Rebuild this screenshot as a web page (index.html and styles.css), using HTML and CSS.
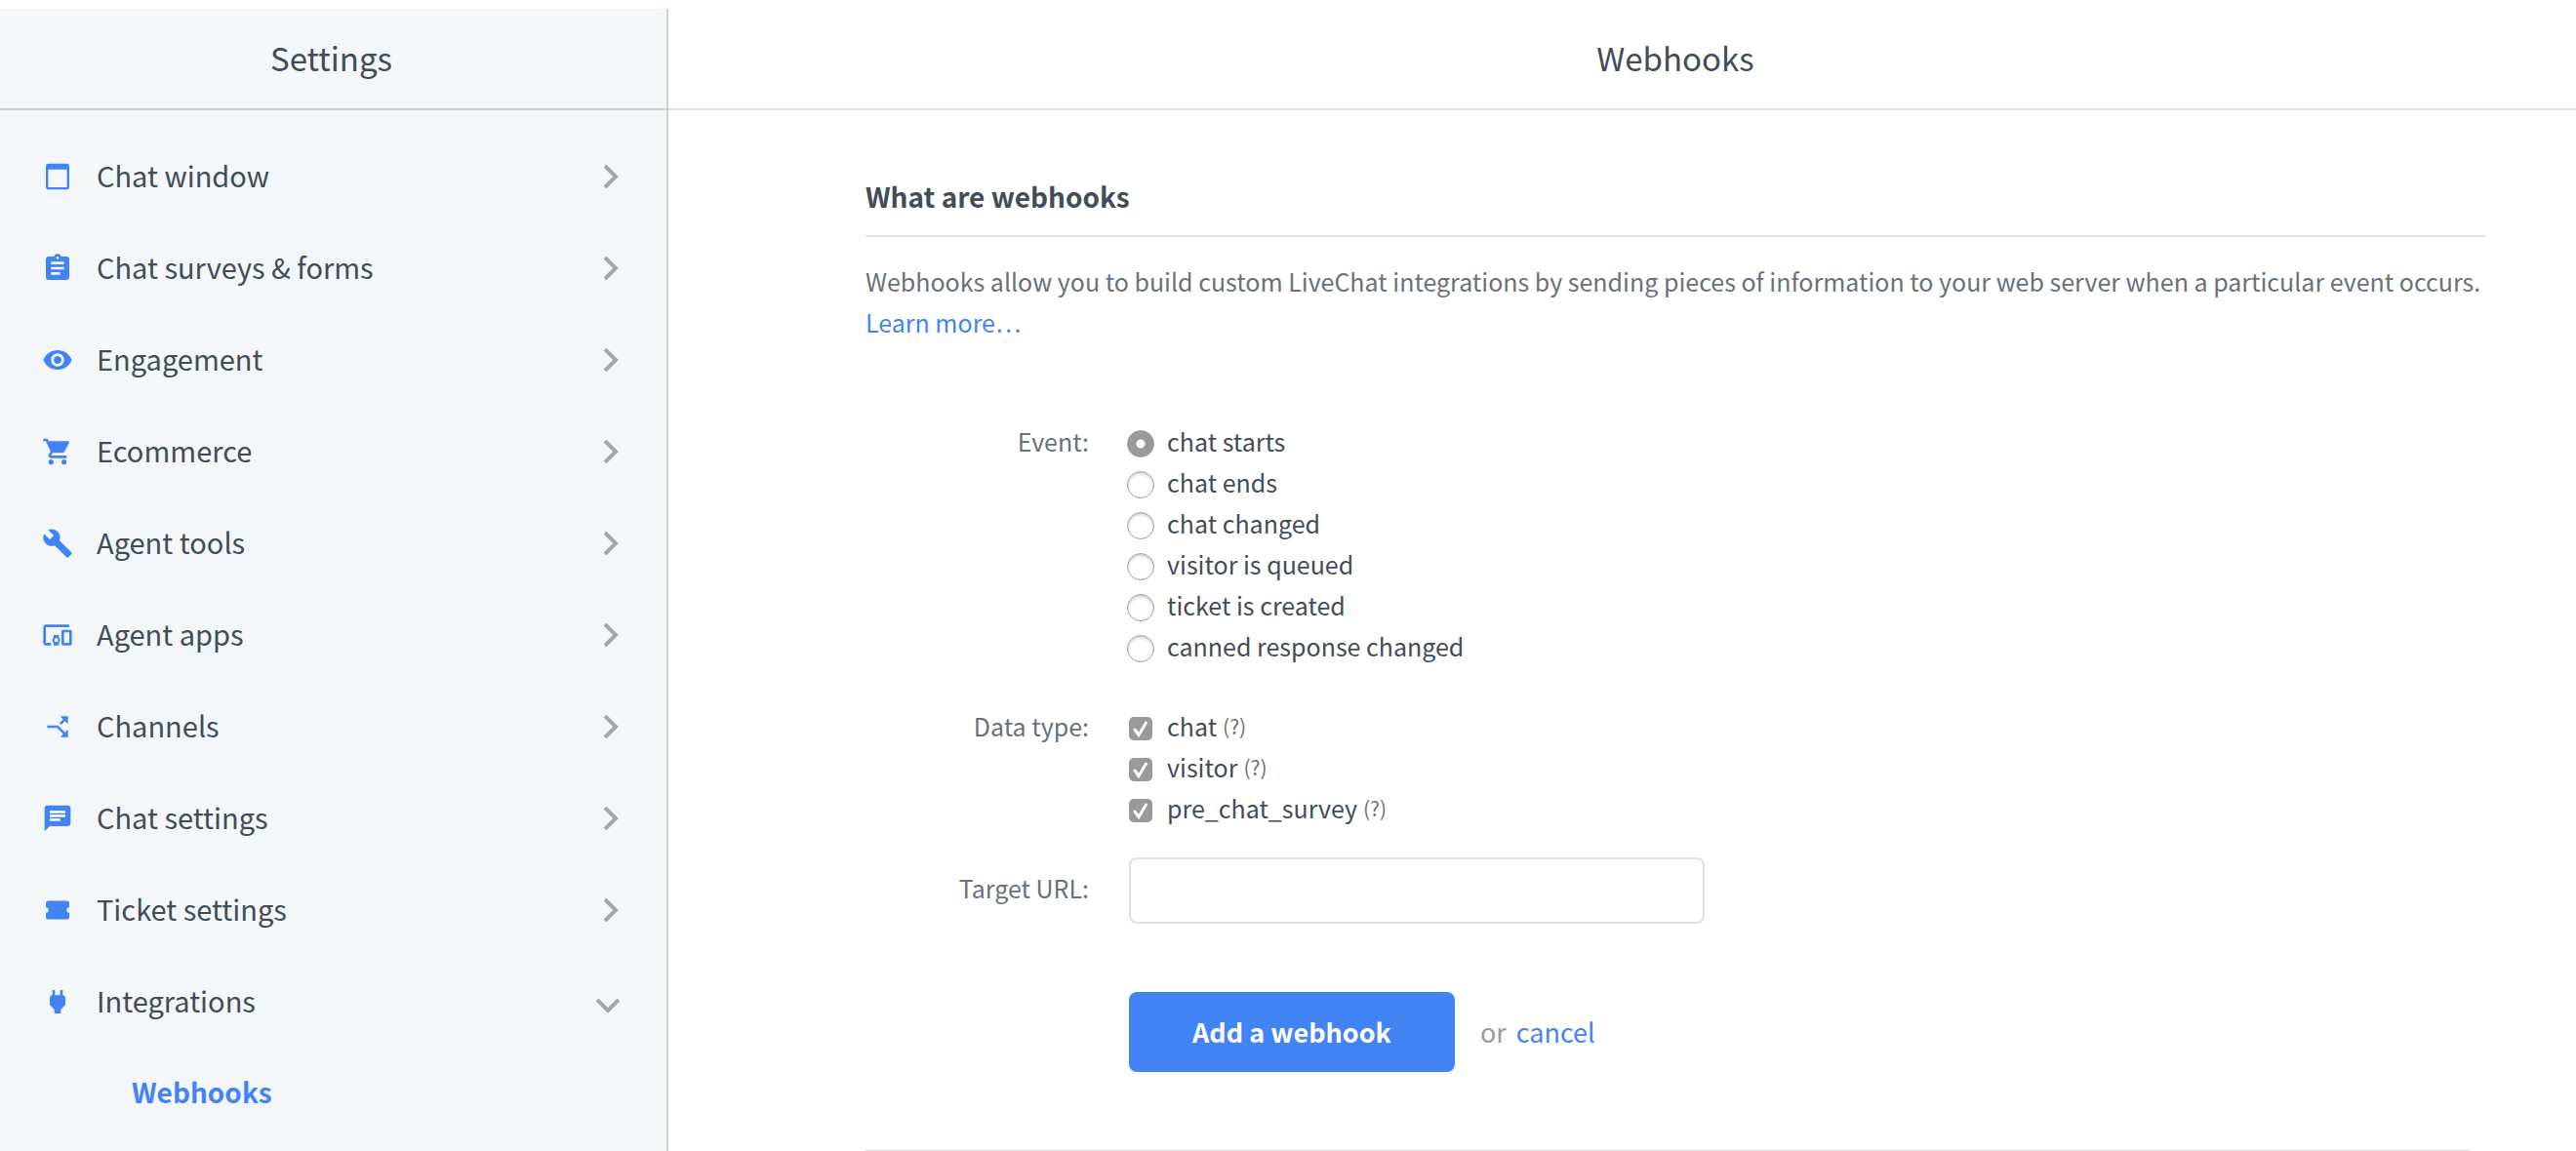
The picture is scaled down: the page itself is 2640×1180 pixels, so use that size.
FILE: index.html
```html
<!DOCTYPE html>
<html lang="en">
<head>
<meta charset="utf-8">
<title>Webhooks</title>
<link rel="stylesheet" href="styles.css">
</head>
<body>
<div class="app">
  <aside class="sidebar">
    <header class="bar bar-side"><h1 class="bar-title">Settings</h1></header>
    <nav>
      <ul class="menu">
        <li><a class="item" href="#"><svg class="icon" viewBox="0 0 24 24"><path d="M19 2H5c-1.100 0-2 .9-2 2v16c0 1.100.9 2 2 2h14c1.100 0 2-.9 2-2V4c0-1.100-.9-2-2-2zm.2 18.200H4.800V6.600h14.400z"/></svg><span class="name">Chat window</span><svg class="chevron" viewBox="0 0 24 24"><path d="M9 1l11 11L9 23"/></svg></a></li>
        <li><a class="item" href="#"><svg class="icon" viewBox="0 0 24 24"><path d="M19 3h-4.180C14.400 1.840 13.300 1 12 1c-1.300 0-2.400.84-2.820 2H5c-1.100 0-2 .9-2 2v14c0 1.100.9 2 2 2h14c1.100 0 2-.9 2-2V5c0-1.100-.9-2-2-2zm-7 0c.55 0 1 .45 1 1s-.45 1-1 1-1-.45-1-1 .45-1 1-1zm2 14H7v-2h7v2zm3-4H7v-2h10v2zm0-4H7V7h10v2z"/></svg><span class="name">Chat surveys &amp; forms</span><svg class="chevron" viewBox="0 0 24 24"><path d="M9 1l11 11L9 23"/></svg></a></li>
        <li><a class="item" href="#"><svg class="icon" viewBox="0 0 24 24"><path d="M12 4.500C7 4.500 2.730 7.610 1 12c1.730 4.390 6 7.500 11 7.500s9.270-3.110 11-7.500c-1.730-4.390-6-7.500-11-7.500zM12 17c-2.760 0-5-2.240-5-5s2.240-5 5-5 5 2.240 5 5-2.240 5-5 5zm0-8c-1.660 0-3 1.340-3 3s1.340 3 3 3 3-1.340 3-3-1.340-3-3-3z"/></svg><span class="name">Engagement</span><svg class="chevron" viewBox="0 0 24 24"><path d="M9 1l11 11L9 23"/></svg></a></li>
        <li><a class="item" href="#"><svg class="icon" viewBox="0 0 24 24"><path d="M7 18c-1.100 0-1.990.9-1.990 2S5.900 22 7 22s2-.9 2-2-.9-2-2-2zM1 2v2h2l3.600 7.590-1.350 2.450c-.16.28-.25.61-.25.96 0 1.100.9 2 2 2h12v-2H7.420c-.14 0-.25-.11-.25-.25l.03-.12.9-1.630h7.450c.75 0 1.410-.41 1.750-1.030l3.580-6.490c.08-.14.12-.31.12-.48 0-.55-.45-1-1-1H5.210l-.94-2H1zm16 16c-1.100 0-1.990.9-1.990 2s.89 2 1.990 2 2-.9 2-2-.9-2-2-2z"/></svg><span class="name">Ecommerce</span><svg class="chevron" viewBox="0 0 24 24"><path d="M9 1l11 11L9 23"/></svg></a></li>
        <li><a class="item" href="#"><svg class="icon" viewBox="0 0 24 24"><path d="M22.700 19l-9.100-9.100c.9-2.300.4-5-1.500-6.900-2-2-5-2.400-7.400-1.300L9 6 6 9 1.600 4.700C.4 7.100.9 10.100 2.900 12.100c1.900 1.900 4.600 2.400 6.900 1.500l9.100 9.100c.4.4 1 .4 1.400 0l2.300-2.300c.5-.4.5-1.100.1-1.400z"/></svg><span class="name">Agent tools</span><svg class="chevron" viewBox="0 0 24 24"><path d="M9 1l11 11L9 23"/></svg></a></li>
        <li><a class="item" href="#"><svg class="icon" viewBox="0 0 24 24"><path d="M3 6h18V4H3c-1.100 0-2 .9-2 2v12c0 1.100.9 2 2 2h4v-2H3V6zm10 6H9v1.780c-.61.55-1 1.330-1 2.220s.39 1.670 1 2.220V20h4v-1.780c.61-.55 1-1.340 1-2.220s-.39-1.670-1-2.220V12zm-2 5.500c-.83 0-1.500-.67-1.500-1.500s.67-1.500 1.500-1.500 1.500.67 1.500 1.500-.67 1.500-1.500 1.500zM22 8h-6c-.5 0-1 .5-1 1v10c0 .5.5 1 1 1h6c.5 0 1-.5 1-1V9c0-.5-.5-1-1-1zm-1 10h-4v-8h4v8z"/></svg><span class="name">Agent apps</span><svg class="chevron" viewBox="0 0 24 24"><path d="M9 1l11 11L9 23"/></svg></a></li>
        <li><a class="item" href="#"><svg class="icon" viewBox="0 0 24 24"><path transform="matrix(0 -1 -1 0 24 24)" d="M14 4l2.290 2.290-2.880 2.880 1.420 1.420 2.880-2.880L20 10V4zm-4 0H4v6l2.290-2.290 4.710 4.700V20h2v-8.410l-5.290-5.300z"/></svg><span class="name">Channels</span><svg class="chevron" viewBox="0 0 24 24"><path d="M9 1l11 11L9 23"/></svg></a></li>
        <li><a class="item" href="#"><svg class="icon" viewBox="0 0 24 24"><path d="M20 2H4c-1.100 0-1.990.9-1.990 2L2 22l4-4h14c1.100 0 2-.9 2-2V4c0-1.100-.9-2-2-2zM6 9h12v2H6V9zm8 5H6v-2h8v2zm4-6H6V6h12v2z"/></svg><span class="name">Chat settings</span><svg class="chevron" viewBox="0 0 24 24"><path d="M9 1l11 11L9 23"/></svg></a></li>
        <li><a class="item" href="#"><svg class="icon" viewBox="0 0 24 24"><path d="M5 4.800h14a2 2 0 0 1 2 2v3.200a2 2 0 0 0 0 4v3.200a2 2 0 0 1-2 2H5a2 2 0 0 1-2-2V14a2 2 0 0 0 0-4V6.800a2 2 0 0 1 2-2z"/></svg><span class="name">Ticket settings</span><svg class="chevron" viewBox="0 0 24 24"><path d="M9 1l11 11L9 23"/></svg></a></li>
        <li>
          <a class="item" href="#" aria-expanded="true"><svg class="icon" viewBox="0 0 24 24"><path d="M16.010 7L16 3h-2v4h-4V3H8v4h-.01C7 6.990 6 7.990 6 8.990v5.490L9.500 18v3h5v-3l3.500-3.510v-5.500c0-1-1-2-1.990-1.990z"/></svg><span class="name">Integrations</span><svg class="chevron" viewBox="0 0 24 24"><path d="M1 10l11 11 11-11"/></svg></a>
          <ul class="submenu"><li><a class="item subitem" href="#" aria-current="page"><span class="name">Webhooks</span></a></li></ul>
        </li>
      </ul>
    </nav>
  </aside>
  <main class="main">
    <header class="bar bar-main"><h1 class="bar-title">Webhooks</h1></header>
    <div class="content">
      <h2 class="heading">What are webhooks</h2>
      <p class="intro">Webhooks allow you to build custom LiveChat integrations by sending pieces of information to your web server when a particular event occurs. <a class="link more" href="#">Learn more…</a></p>
      <form class="form">
        <span class="label" id="event-label">Event:</span>
        <div class="options" role="radiogroup" aria-labelledby="event-label">
          <label class="option"><input class="radio" type="radio" name="event" checked>chat starts</label>
          <label class="option"><input class="radio" type="radio" name="event">chat ends</label>
          <label class="option"><input class="radio" type="radio" name="event">chat changed</label>
          <label class="option"><input class="radio" type="radio" name="event">visitor is queued</label>
          <label class="option"><input class="radio" type="radio" name="event">ticket is created</label>
          <label class="option"><input class="radio" type="radio" name="event">canned response changed</label>
        </div>
        <span class="label" id="type-label">Data type:</span>
        <div class="options" role="group" aria-labelledby="type-label">
          <div class="option"><span class="tick"><input class="check" type="checkbox" id="t-chat" checked><svg class="mark" viewBox="0 0 24 24"><path d="M6 13l4 5.500L17.500 6"/></svg></span><label for="t-chat">chat</label><span class="hint">(?)</span></div>
          <div class="option"><span class="tick"><input class="check" type="checkbox" id="t-visitor" checked><svg class="mark" viewBox="0 0 24 24"><path d="M6 13l4 5.500L17.500 6"/></svg></span><label for="t-visitor">visitor</label><span class="hint">(?)</span></div>
          <div class="option"><span class="tick"><input class="check" type="checkbox" id="t-survey" checked><svg class="mark" viewBox="0 0 24 24"><path d="M6 13l4 5.500L17.500 6"/></svg></span><label for="t-survey">pre_chat_survey</label><span class="hint">(?)</span></div>
        </div>
        <label class="label url-label" for="url">Target URL:</label>
        <input class="url" type="text" id="url">
        <div class="actions"><button class="submit" type="button">Add a webhook</button><span class="or">or</span><a class="link" href="#">cancel</a></div>
      </form>
      <hr class="rule">
    </div>
  </main>
</div>
</body>
</html>
```
FILE: styles.css
```css
* { box-sizing: border-box; }
body {
  margin: 0;
  background: #fff;
  color: #424d57;
  font-family: "Noto Sans CJK SC", "Noto Sans", sans-serif;
  font-size: 25px;
  line-height: 42px;
}
ul { list-style: none; margin: 0; padding: 0; }
a { text-decoration: none; color: inherit; }

.app {
  display: grid;
  grid-template-columns: 685px 1fr;
  min-height: 100vh;
  padding-top: 9px;
}
.sidebar { background: #f3f7fa; border-right: 2px solid #cad0dd; }
.bar {
  display: flex;
  align-items: center;
  justify-content: center;
  height: 104px;
  padding-bottom: 2px;
}
.bar-side { border-bottom: 2px solid #cad0dd; padding-right: 4px; }
.bar-main { border-bottom: 2px solid #dce0e6; padding-left: 202px; padding-right: 93px; }
.bar-title { margin: 0; font-size: 33px; font-weight: 400; }

.menu { padding-top: 21px; font-size: 29px; }
.item {
  display: flex;
  align-items: center;
  height: 94px;
  padding: 0 46px 0 43px;
}
.icon { width: 32px; height: 32px; margin-right: 24px; fill: #4384f5; }
.name { flex: 1; padding-bottom: 4px; }
.chevron { width: 28px; height: 28px; padding: 2px; fill: none; stroke: #a2a6ad; stroke-width: 4; }
.subitem { padding-left: 135px; color: #4384f5; font-size: 28px; font-weight: 700; }

.content { padding: 67px 93px 0 202px; }
.heading {
  margin: 0 0 24px;
  padding-bottom: 19px;
  border-bottom: 2px solid #dce3e8;
  font-size: 28px;
  font-weight: 700;
}
.intro { margin: 0 0 80px; color: #68727c; }
.link { color: #4384f5; }
.more { display: block; }

.form {
  display: grid;
  grid-template-columns: 229px 1fr;
  column-gap: 39px;
}
.label { text-align: right; color: #68727c; }
.options { margin-bottom: 40px; }
.options + .label + .options { margin-bottom: 30px; }
.option { display: flex; align-items: center; height: 42px; }
.radio {
  appearance: none;
  width: 28px;
  height: 28px;
  margin: 6px 13px 0 0;
  border: 1px solid #a0a0a3;
  border-radius: 50%;
  background: #fff;
  box-shadow: inset 0 2px 3px #d0d0d2;
}
.radio:checked {
  border-color: #98979b;
  background: radial-gradient(circle, #fff 4px, #9a999d 5px);
  box-shadow: none;
}
.tick { display: grid; margin: 6px 15px 0 2px; }
.check, .mark { grid-area: 1 / 1; width: 24px; height: 24px; }
.check { appearance: none; margin: 0; border-radius: 5px; background: #9a999d; }
.mark { fill: none; stroke: #fff; stroke-width: 3; stroke-linecap: round; pointer-events: none; }
.hint { margin-left: 6px; color: #68727c; font-size: 21px; }
.url-label { padding-top: 10px; }
.url {
  width: 590px;
  height: 68px;
  margin-left: 2px;
  padding: 0 16px;
  border: 2px solid #dce1e7;
  border-radius: 8px;
  background: #fff;
  color: inherit;
  font: inherit;
}
.actions {
  grid-column: 2;
  display: flex;
  align-items: center;
  margin: 70px 0 80px 2px;
  font-size: 27px;
}
.submit {
  width: 334px;
  height: 82px;
  padding: 0 0 1px;
  border: 0;
  border-radius: 8px;
  background: #4384f5;
  color: #fff;
  font: inherit;
  font-weight: 700;
}
.or { margin: 0 10px 0 26px; color: #999; }
.rule { margin: 0 16px 0 0; border: 0; border-top: 1px solid #dcdcdc; }
```
